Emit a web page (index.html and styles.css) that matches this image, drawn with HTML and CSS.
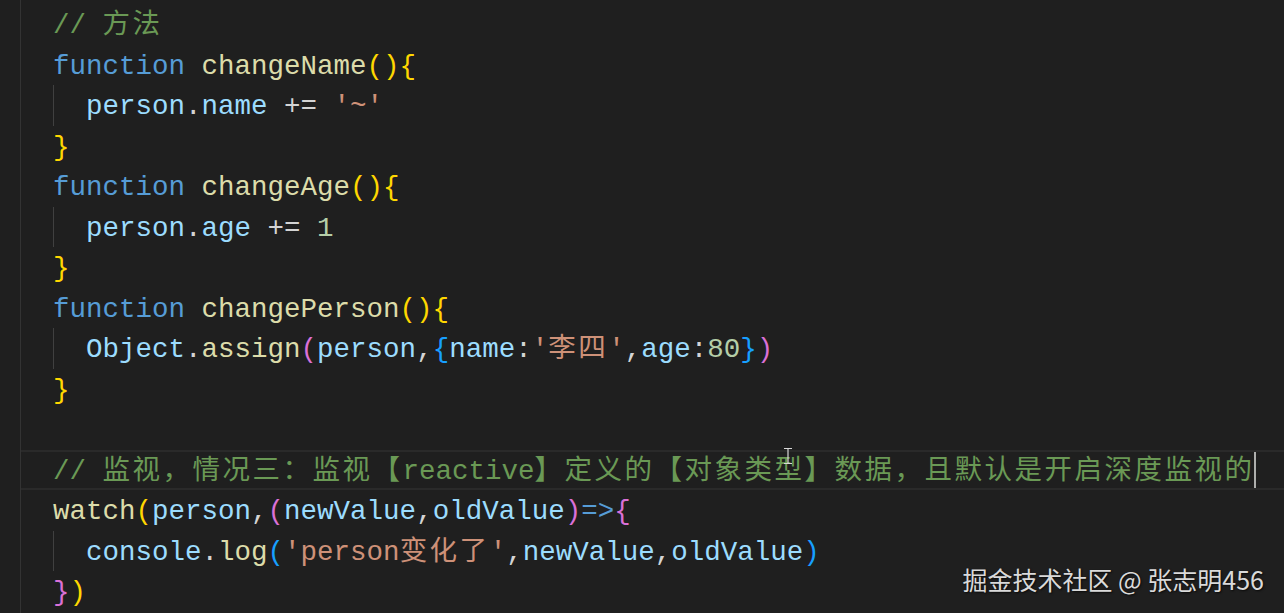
FILE: index.html
```html
<!DOCTYPE html>
<html lang="zh-CN">
<head>
<meta charset="utf-8">
<title>editor</title>
<link rel="stylesheet" href="styles.css">
</head>
<body>
<div class="editor">
  <div class="gutter"></div>
  <div class="code">
    <div class="line"><span class="c">// </span><span class="c cj">方法</span></div>
    <div class="line"><span class="k">function</span> <span class="f">changeName</span><span class="b1">(){</span></div>
    <div class="line ind">  <span class="v">person</span>.<span class="v">name</span> += <span class="s">'~'</span></div>
    <div class="line"><span class="b1">}</span></div>
    <div class="line"><span class="k">function</span> <span class="f">changeAge</span><span class="b1">(){</span></div>
    <div class="line ind">  <span class="v">person</span>.<span class="v">age</span> += <span class="n">1</span></div>
    <div class="line"><span class="b1">}</span></div>
    <div class="line"><span class="k">function</span> <span class="f">changePerson</span><span class="b1">(){</span></div>
    <div class="line ind">  <span class="v">Object</span>.<span class="f">assign</span><span class="b2">(</span><span class="v">person</span>,<span class="b3">{</span><span class="v">name</span>:<span class="s">'</span><span class="s cj">李四</span><span class="s">'</span>,<span class="v">age</span>:<span class="n">80</span><span class="b3">}</span><span class="b2">)</span></div>
    <div class="line"><span class="b1">}</span></div>
    <div class="line"> </div>
    <div class="line current"><span class="c">// </span><span class="c cj">监视，情况三：监视【</span><span class="c">reactive</span><span class="c cj">】定义的【对象类型】数据，且默认是开启深度监视的</span><span class="caret"></span></div>
    <div class="line"><span class="f">watch</span><span class="b1">(</span><span class="v">person</span>,<span class="b2">(</span><span class="v">newValue</span>,<span class="v">oldValue</span><span class="b2">)</span><span class="k">=&gt;</span><span class="b2">{</span></div>
    <div class="line ind">  <span class="v">console</span>.<span class="f">log</span><span class="b3">(</span><span class="s">'person</span><span class="s cj">变化了</span><span class="s">'</span>,<span class="v">newValue</span>,<span class="v">oldValue</span><span class="b3">)</span></div>
    <div class="line"><span class="b2">}</span><span class="b1">)</span></div>
  </div>
  <svg class="ibeam" width="10" height="18" viewBox="0 0 10 18"><path d="M1 1.5h8M5 1.5v15M1 16.5h8" stroke="#d8d8d8" stroke-width="1.2" fill="none"/></svg>
  <div class="watermark">掘金技术社区 @ 张志明456</div>
</div>
</body>
</html>
```

FILE: styles.css
```css
html, body {
  margin: 0;
  padding: 0;
  background: #1f1f1f;
}
.editor {
  position: relative;
  display: flex;
  width: 1284px;
  height: 613px;
  overflow: hidden;
  background: #1f1f1f;
}
.gutter {
  width: 20px;
  flex: none;
  border-right: 1px solid #333333;
}
.code {
  flex: 1;
  padding-top: 4px;
  font-family: "Liberation Mono", "DejaVu Sans Mono", monospace;
  font-size: 27.5px;
  color: #d4d4d4;
}
.line {
  height: 40.5px;
  line-height: 40.5px;
  padding-top: 2px;
  padding-left: 32px;
  white-space: pre;
  box-sizing: border-box;
}
.line.ind {
  background: linear-gradient(#404040, #404040) no-repeat 32px 0 / 1px 100%;
}
.line.current {
  border-top: 2px solid #2a2a2a;
  border-bottom: 2px solid #2a2a2a;
  line-height: 36.5px;
}
.cj {
  font-family: "Noto Sans CJK SC", sans-serif;
  font-size: 27.5px;
  line-height: 1;
  letter-spacing: 2.5px;
}
.c { color: #6a9955; }
.k { color: #569cd6; }
.f { color: #dcdcaa; }
.v { color: #9cdcfe; }
.s { color: #ce9178; }
.n { color: #b5cea8; }
.b1 { color: #ffd700; }
.b2 { color: #da70d6; }
.b3 { color: #179fff; }
.caret {
  display: inline-block;
  width: 2px;
  height: 36px;
  margin-top: -2px;
  margin-left: -1px;
  vertical-align: top;
  background: #aeafad;
}
.ibeam {
  position: absolute;
  left: 783px;
  top: 447px;
}
.watermark {
  position: absolute;
  right: 20px;
  top: 563px;
  font-family: "Noto Sans CJK SC", "Noto Sans", sans-serif;
  font-size: 25px;
  line-height: 32px;
  color: #dadada;
  text-shadow: 1px 1px 2px rgba(0, 0, 0, 0.7);
}
```
